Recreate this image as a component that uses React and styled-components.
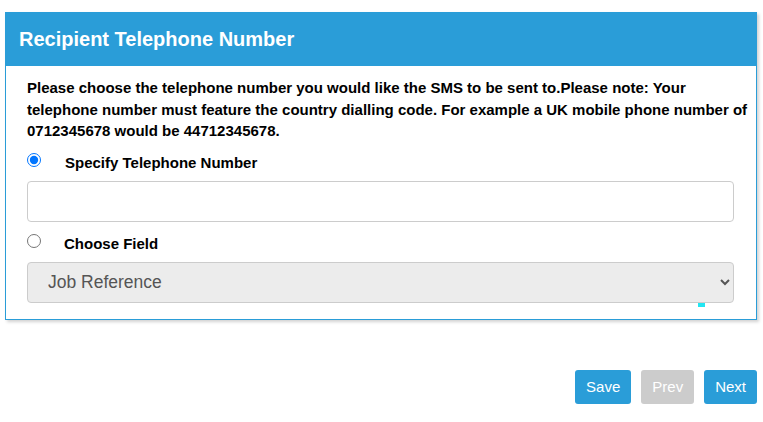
import React from "react";
import styled, { createGlobalStyle } from "styled-components";

const GlobalStyle = createGlobalStyle`
  body {
    margin: 0;
    background: #fff;
    font-family: "Liberation Sans", Arial, sans-serif;
  }
`;

const Page = styled.div`
  padding: 12px 6px 0 5px;
`;

const Panel = styled.div`
  position: relative;
  border: 1px solid #2a9dd8;
  box-shadow: 2px 2px 3px rgba(0, 0, 0, 0.18);
  background: #fff;
`;

const Header = styled.div`
  height: 53px;
  background: #2a9dd8;
  color: #fff;
  display: flex;
  align-items: center;
  padding-left: 13px;
  font-size: 20px;
  font-weight: bold;
`;

const Body = styled.div`
  padding: 11px 3px 16px 21px;
`;

const Intro = styled.p`
  margin: 0;
  font-size: 15px;
  font-weight: bold;
  line-height: 21.5px;
  color: #000;
  white-space: nowrap;
`;

const RadioRow = styled.label`
  display: flex;
  align-items: center;
  height: 20px;
  margin-top: ${(p) => p.$top}px;
  font-size: 15px;
  font-weight: bold;
  color: #000;
`;

const Radio = styled.input`
  width: 14px;
  height: 14px;
  margin: 0 ${(p) => p.$gap}px 6px 0;
`;

const TextInput = styled.input`
  display: block;
  box-sizing: border-box;
  width: 707px;
  height: 41px;
  margin-top: 8px;
  border: 1px solid #ccc;
  border-radius: 4px;
  font-size: 16px;
  padding: 0 12px;
  outline: none;
`;

const Select = styled.select`
  display: block;
  box-sizing: border-box;
  width: 707px;
  height: 41px;
  margin-top: 8px;
  border: 1px solid #ccc;
  border-radius: 4px;
  background: #ececec;
  color: #555;
  font-family: "Liberation Sans", Arial, sans-serif;
  font-size: 17.5px;
  padding: 0 16px;
`;

const Marker = styled.span`
  position: absolute;
  left: 692px;
  bottom: 12px;
  width: 7px;
  height: 4px;
  background: #22e6f2;
`;

const Footer = styled.div`
  display: flex;
  justify-content: flex-end;
  gap: 10px;
  margin-top: 50px;
`;

const Button = styled.button`
  height: 34px;
  padding: 0 11px;
  border: none;
  border-radius: 3px;
  background: ${(p) => (p.$disabled ? "#cccccc" : "#2a9dd8")};
  color: #fff;
  font-family: "Liberation Sans", Arial, sans-serif;
  font-size: 15px;
  cursor: pointer;
`;

export default function App() {
  return (
    <Page>
      <GlobalStyle />
      <Panel>
        <Header>Recipient Telephone Number</Header>
        <Body>
          <Intro>
            Please choose the telephone number you would like the SMS to be sent
            to.Please note: Your
            <br />
            telephone number must feature the country dialling code. For example
            a UK mobile phone number of
            <br />
            0712345678 would be 44712345678.
          </Intro>
          <RadioRow $top={11}>
            <Radio type="radio" name="phone" defaultChecked $gap={24} />
            Specify Telephone Number
          </RadioRow>
          <TextInput type="text" />
          <RadioRow $top={12}>
            <Radio type="radio" name="phone" $gap={23} />
            Choose Field
          </RadioRow>
          <Select defaultValue="job">
            <option value="job">Job Reference</option>
          </Select>
        </Body>
        <Marker />
      </Panel>
      <Footer>
        <Button>Save</Button>
        <Button $disabled>Prev</Button>
        <Button>Next</Button>
      </Footer>
    </Page>
  );
}
